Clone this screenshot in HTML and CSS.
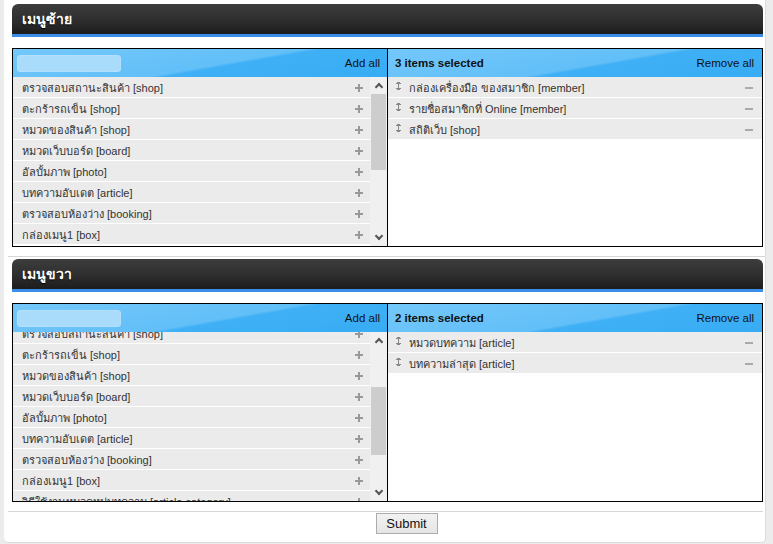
FILE: index.html
```html
<!DOCTYPE html>
<html lang="th">
<head>
  <meta charset="UTF-8">
  <title>จัดการเมนู</title>
  <link rel="stylesheet" href="styles.css">
</head>
<body>
  <form class="panel">

    <!-- เมนูซ้าย -->
    <section class="section">
      <h2 class="section-title">เมนูซ้าย</h2>
      <div class="picker">
        <div class="pane pane-available">
          <div class="pane-head">
            <input class="search" type="text">
            <a href="#" class="head-link">Add all</a>
          </div>
          <div class="pane-body">
            <ul class="item-list">
              <li class="item">ตรวจสอบสถานะสินค้า [shop]<span class="plus"></span></li>
              <li class="item">ตะกร้ารถเข็น [shop]<span class="plus"></span></li>
              <li class="item">หมวดของสินค้า [shop]<span class="plus"></span></li>
              <li class="item">หมวดเว็บบอร์ด [board]<span class="plus"></span></li>
              <li class="item">อัลบั้มภาพ [photo]<span class="plus"></span></li>
              <li class="item">บทความอับเดต [article]<span class="plus"></span></li>
              <li class="item">ตรวจสอบห้องว่าง [booking]<span class="plus"></span></li>
              <li class="item">กล่องเมนู1 [box]<span class="plus"></span></li>
            </ul>
            <div class="scrollbar">
              <span class="arrow arrow-up"></span>
              <span class="thumb thumb-top"></span>
              <span class="arrow arrow-down"></span>
            </div>
          </div>
        </div>
        <div class="pane pane-selected">
          <div class="pane-head">
            <span class="count">3 items selected</span>
            <a href="#" class="head-link">Remove all</a>
          </div>
          <ul class="item-list">
            <li class="item"><span class="drag"></span>กล่องเครื่องมือ ของสมาชิก [member]<span class="minus"></span></li>
            <li class="item"><span class="drag"></span>รายชื่อสมาชิกที่ Online [member]<span class="minus"></span></li>
            <li class="item"><span class="drag"></span>สถิติเว็บ [shop]<span class="minus"></span></li>
          </ul>
        </div>
      </div>
    </section>

    <!-- เมนูขวา -->
    <section class="section">
      <h2 class="section-title">เมนูขวา</h2>
      <div class="picker">
        <div class="pane pane-available">
          <div class="pane-head">
            <input class="search" type="text">
            <a href="#" class="head-link">Add all</a>
          </div>
          <div class="pane-body">
            <ul class="item-list scrolled">
              <li class="item">ตรวจสอบสถานะสินค้า [shop]<span class="plus"></span></li>
              <li class="item">ตะกร้ารถเข็น [shop]<span class="plus"></span></li>
              <li class="item">หมวดของสินค้า [shop]<span class="plus"></span></li>
              <li class="item">หมวดเว็บบอร์ด [board]<span class="plus"></span></li>
              <li class="item">อัลบั้มภาพ [photo]<span class="plus"></span></li>
              <li class="item">บทความอับเดต [article]<span class="plus"></span></li>
              <li class="item">ตรวจสอบห้องว่าง [booking]<span class="plus"></span></li>
              <li class="item">กล่องเมนู1 [box]<span class="plus"></span></li>
              <li class="item">วิธีใช้งานหมวดหมู่บทความ [article category]<span class="plus"></span></li>
            </ul>
            <div class="scrollbar">
              <span class="arrow arrow-up"></span>
              <span class="thumb thumb-mid"></span>
              <span class="arrow arrow-down"></span>
            </div>
          </div>
        </div>
        <div class="pane pane-selected">
          <div class="pane-head">
            <span class="count">2 items selected</span>
            <a href="#" class="head-link">Remove all</a>
          </div>
          <ul class="item-list">
            <li class="item"><span class="drag"></span>หมวดบทความ [article]<span class="minus"></span></li>
            <li class="item"><span class="drag"></span>บทความล่าสุด [article]<span class="minus"></span></li>
          </ul>
        </div>
      </div>
    </section>

    <div class="actions">
      <button type="submit" class="submit-btn">Submit</button>
    </div>
  </form>
</body>
</html>
```

FILE: styles.css
```css
body {
  margin: 0;
  background-color: #ececec;
  font-family: "Liberation Sans", "DejaVu Sans", sans-serif;
  font-size: 11px;
  color: #333;
}

/* 흰 패널 */
.panel {
  margin-left: 4px;
  width: 762px;
  background: #fff;
  border-right: 1px solid #dcdcdc;
  border-bottom: 1px solid #dcdcdc;
  border-radius: 0 0 5px 5px;
  padding: 4px 0 8px 0;
  box-sizing: border-box;
}

.section {
  padding: 0 2px 9px 8px;
}

.section + .section {
  border-top: 1px solid #d6d6d6;
  margin-left: 4px;
  padding-left: 4px;
  padding-top: 2px;
}

.section-title {
  margin: 0 0 11px;
  height: 30px;
  line-height: 30px;
  padding-left: 10px;
  color: #fff;
  font-size: 14px;
  font-weight: bold;
  text-shadow: 0 1px 1px #000;
  background: linear-gradient(#3d3d3d, #2e2e2e 55%, #1c1c1c);
  border-bottom: 3px solid #3a8ee8;
  border-radius: 6px 6px 0 0;
}

/* 선택 위젯 */
.picker {
  display: grid;
  grid-template-columns: 374px 1fr;
  border: 1px solid #000;
  height: 197px;
}

.pane-selected {
  border-left: 1px solid #000;
}

.pane-head {
  display: flex;
  align-items: center;
  justify-content: space-between;
  height: 28px;
  padding: 0 7px 0 4px;
  background: linear-gradient(170deg, #74c8fa 0%, #62bff8 55%, #3fb0f5 58%, #37acf4 100%);
}

.pane-selected .pane-head {
  padding: 0 8px 0 7px;
}

.search {
  width: 104px;
  height: 17px;
  box-sizing: border-box;
  border: 1px solid #b5e0fb;
  border-radius: 3px;
  background: #a9dcfb;
  margin: 0;
  padding: 0;
}

.head-link {
  color: #111;
  text-decoration: none;
  font-size: 11.5px;
}

.count {
  font-weight: bold;
  color: #111;
  font-size: 11.5px;
}

.pane-body {
  display: flex;
  height: 169px;
  overflow: hidden;
}

.item-list {
  list-style: none;
  margin: 0;
  padding: 0;
  flex: 1;
  overflow: hidden;
}

.item-list.scrolled .item:first-child {
  margin-top: -9px;
}

.item {
  display: flex;
  align-items: center;
  height: 20px;
  padding: 1px 7px 0 9px;
  box-sizing: border-box;
  height: 21px;
  border-bottom: 1px solid #fff;
  background: #ebebeb;
  white-space: nowrap;
}

.pane-selected .item {
  padding: 1px 9px 0 7px;
}

.plus,
.minus {
  margin-left: auto;
  position: relative;
  width: 8px;
  height: 8px;
}

.plus::before,
.plus::after,
.minus::before {
  content: "";
  position: absolute;
  background: #999;
}

.plus::before,
.minus::before {
  left: 0;
  top: 3px;
  width: 8px;
  height: 2px;
}

.plus::after {
  left: 3px;
  top: 0;
  width: 2px;
  height: 8px;
}

.minus::before {
  background: #aaa;
}

/* 드래그 아이콘 */
.drag {
  position: relative;
  width: 5px;
  height: 10px;
  margin: -4px 8px 0 1px;
}

.drag::before {
  content: "";
  position: absolute;
  left: 2px;
  top: 1px;
  width: 1px;
  height: 8px;
  background: #888;
}

.drag::after {
  content: "";
  position: absolute;
  left: 0;
  top: 0;
  width: 5px;
  height: 10px;
  background:
    linear-gradient(#888, #888) 1px 1px / 3px 1px no-repeat,
    linear-gradient(#888, #888) 0 2px / 5px 1px no-repeat,
    linear-gradient(#888, #888) 1px 8px / 3px 1px no-repeat,
    linear-gradient(#888, #888) 0 7px / 5px 1px no-repeat;
}

/* 스크롤바 */
.scrollbar {
  width: 17px;
  background: #f0f0f0;
  display: flex;
  flex-direction: column;
  align-items: center;
}

.arrow {
  width: 17px;
  height: 17px;
  position: relative;
}

.arrow::before {
  content: "";
  position: absolute;
  left: 6px;
  width: 4px;
  height: 4px;
  border-left: 2px solid #555;
  border-top: 2px solid #555;
}

.arrow-up::before {
  top: 7px;
  transform: rotate(45deg);
}

.arrow-down {
  margin-top: auto;
}

.arrow-down::before {
  top: 4px;
  transform: rotate(225deg);
}

.thumb {
  width: 15px;
  background: #cdcdcd;
}

.thumb-top {
  height: 76px;
}

.thumb-mid {
  margin-top: 38px;
  height: 68px;
}

/* 제출 */
.actions {
  border-top: 1px solid #d6d6d6;
  margin: 0 2px 0 4px;
  padding: 1px 0 0 42px;
  text-align: center;
}

.submit-btn {
  font-family: "Liberation Sans", sans-serif;
  font-size: 13px;
  color: #111;
  height: 21px;
  width: 62px;
  padding: 0;
  border: 1px solid #acacac;
  background: linear-gradient(#f2f2f2, #e5e5e5);
}
```
